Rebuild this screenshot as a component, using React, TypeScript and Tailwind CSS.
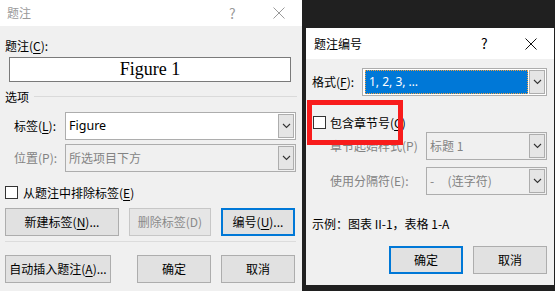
import type { ReactNode } from 'react'

const font = { fontFamily: '"Noto Sans CJK SC", "Noto Sans", sans-serif' }

function Acc({ children }: { children: ReactNode }) {
  return <span className="underline underline-offset-2 decoration-1">{children}</span>
}

function CloseIcon({ color }: { color: string }) {
  return (
    <svg width="12" height="12" viewBox="0 0 12 12">
      <path d="M0.5 0.5 L11.5 11.5 M11.5 0.5 L0.5 11.5" stroke={color} strokeWidth="1" fill="none" />
    </svg>
  )
}

function Combo({ children, disabled, className }: { children: ReactNode; disabled?: boolean; className: string }) {
  return (
    <div
      className={`flex items-stretch border border-[#adadad] ${disabled ? 'bg-[#f0f0f0]' : 'bg-white'} ${className}`}
    >
      <div className={`flex flex-1 items-center overflow-hidden pl-[2px] ${disabled ? 'text-[#838383]' : 'text-black'}`}>
        {children}
      </div>
      <div className="m-[1px] flex w-[16px] items-center justify-center border border-[#adadad] bg-[#e5e5e5]">
        <svg width="9" height="6" viewBox="0 0 9 6">
          <path d="M1 1 L4.5 4.5 L8 1" fill="none" stroke="#333" strokeWidth="1.1" />
        </svg>
      </div>
    </div>
  )
}

function Btn({ children, def, disabled, className }: { children: ReactNode; def?: boolean; disabled?: boolean; className: string }) {
  return (
    <div
      className={`flex h-[28px] items-center justify-center bg-[#e1e1e1] text-[12px] ${
        def ? 'border-2 border-[#0078d7]' : 'border border-[#adadad]'
      } ${disabled ? 'text-[#8a8a8a] bg-[#e6e6e6] border-[#c7c7c7]' : 'text-black'} ${className}`}
    >
      {children}
    </div>
  )
}

function Check() {
  return <div className="h-[13px] w-[13px] shrink-0 border border-[#333] bg-white" />
}

function CaptionDialog() {
  return (
    <div className="flex h-[291px] w-[302px] flex-col bg-[#f0f0f0] text-[12px] text-black">
      <div className="flex h-[26px] items-center bg-white pl-[7px] text-[#9a9a9a]">
        <span className="flex-1">题注</span>
        <span className="w-[14px] text-[14px]">?</span>
        <span className="ml-[30px] mr-[17px]">
          <CloseIcon color="#9a9a9a" />
        </span>
      </div>
      <div className="flex flex-col px-[5px]">
        <div className="mt-[11px] h-[17px] leading-[17px]">
          题注(<Acc>C</Acc>):
        </div>
        <div
          className="ml-[4px] mt-[3px] flex h-[25px] w-[282px] items-center justify-center border border-[#7a7a7a] bg-white text-[18px]"
          style={{ fontFamily: '"Liberation Serif", serif' }}
        >
          Figure 1
        </div>
        <div className="mt-[6px] flex h-[17px] items-center">
          <span>选项</span>
          <div className="ml-[5px] h-px flex-1 bg-[#dadada]" />
        </div>
        <div className="mt-[7px] flex h-[28px] items-center">
          <span className="ml-[9px] w-[51px]">
            标签(<Acc>L</Acc>):
          </span>
          <Combo className="h-[28px] w-[231px]">
            <span className="pl-[1px] text-[12.5px]" style={{ fontFamily: '"Noto Sans", sans-serif' }}>Figure</span>
          </Combo>
        </div>
        <div className="mt-[4px] flex h-[28px] items-center">
          <span className="ml-[9px] w-[51px] text-[#838383]">位置(P):</span>
          <Combo disabled className="h-[28px] w-[231px]">
            <span className="pl-[1px]">所选项目下方</span>
          </Combo>
        </div>
        <div className="mt-[13px] flex h-[15px] items-center gap-[5px]">
          <Check />
          <span>
            从题注中排除标签(<Acc>E</Acc>)
          </span>
        </div>
        <div className="mt-[8px] flex items-center">
          <Btn className="w-[114px]">
            新建标签(<Acc>N</Acc>)...
          </Btn>
          <Btn disabled className="ml-[10px] w-[82px]">
            删除标签(D)
          </Btn>
          <Btn def className="ml-[10px] w-[74px]">
            编号(<Acc>U</Acc>)...
          </Btn>
        </div>
        <div className="mt-[5px] h-px w-[291px] bg-[#dcdcdc]" />
        <div className="mt-[13px] flex items-center">
          <Btn className="w-[106px]">
            自动插入题注(<Acc>A</Acc>)...
          </Btn>
          <Btn className="ml-[26px] w-[74px]">确定</Btn>
          <Btn className="ml-[10px] w-[74px]">取消</Btn>
        </div>
      </div>
    </div>
  )
}

function NumberingDialog() {
  return (
    <div className="relative flex h-[257px] w-[248px] flex-col bg-[#f0f0f0] text-[12px] text-black">
      <div className="flex h-[31px] items-center bg-white pl-[8px]">
        <span className="flex-1">题注编号</span>
        <span className="w-[14px] text-[14px]">?</span>
        <span className="ml-[30px] mr-[17px]">
          <CloseIcon color="#111" />
        </span>
      </div>
      <div className="flex flex-col pl-[6px]">
        <div className="mt-[9px] flex h-[28px] items-center">
          <span className="w-[50px]">
            格式(<Acc>F</Acc>):
          </span>
          <Combo className="h-[28px] w-[185px]">
            <div
              className="flex h-[24px] flex-1 items-center border border-dotted border-[#f0a040] bg-[#0078d7] pl-[3px] text-white"
              style={{ fontFamily: '"Noto Sans", sans-serif' }}
            >
              1, 2, 3, …
            </div>
          </Combo>
        </div>
        <div className="mt-[19px] flex h-[15px] items-center gap-[4px] pl-[1px]">
          <Check />
          <span className="whitespace-nowrap">
            包含章节号(<Acc>C</Acc>)
          </span>
        </div>
        <div className="mt-[2px] flex h-[28px] items-center">
          <span className="ml-[18px] w-[96px] text-[#838383]">章节起始样式(P)</span>
          <Combo disabled className="h-[28px] w-[121px]">
            <span className="pl-[1px]">标题 1</span>
          </Combo>
        </div>
        <div className="mt-[7px] flex h-[28px] items-center">
          <span className="ml-[18px] w-[96px] text-[#838383]">使用分隔符(E):</span>
          <Combo disabled className="h-[28px] w-[121px]">
            <span className="pl-[1px] whitespace-pre">-     (连字符)</span>
          </Combo>
        </div>
        <div className="mt-[20px] h-[17px] leading-[17px]">示例：图表 II-1，表格 1-A</div>
        <div className="mt-[14px] flex items-center">
          <Btn def className="ml-[77px] w-[74px]">确定</Btn>
          <Btn className="ml-[10px] w-[74px]">取消</Btn>
        </div>
      </div>
      <div className="absolute left-[1px] top-[72px] h-[45px] w-[96px] border-[5px] border-[#f81c1c]" />
    </div>
  )
}

export default function App() {
  return (
    <div className="relative h-[291px] w-[555px] overflow-hidden bg-[#f0f0f0]" style={font}>
      <CaptionDialog />
      <div className="absolute left-[302px] top-0 h-[291px] w-[253px] bg-[#202020] pl-[4px] pt-[28px]">
        <NumberingDialog />
      </div>
    </div>
  )
}
